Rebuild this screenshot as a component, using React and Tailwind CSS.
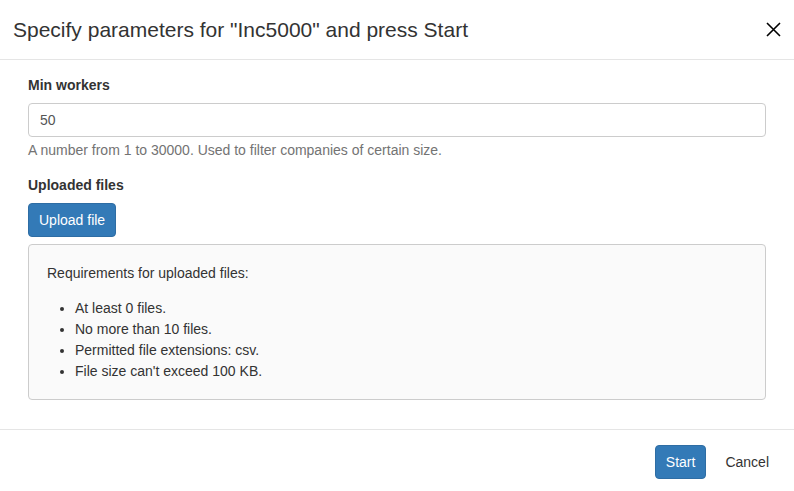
import React from 'react';

const requirements = [
  'At least 0 files.',
  'No more than 10 files.',
  'Permitted file extensions: csv.',
  "File size can't exceed 100 KB.",
];

const App = () => {
  return (
    <div className="w-full bg-white text-[#333] font-['Liberation_Sans',Arial,sans-serif] text-[14px] leading-5">
      {/* Header */}
      <div className="flex items-center justify-between pl-[13px] pr-[13px] pt-[15px] pb-[15px] border-b border-[#e5e5e5]">
        <h4 className="text-[21px] leading-[29px] font-normal">
          Specify parameters for "Inc5000" and press Start
        </h4>
        <button className="w-[15px] h-[15px] flex items-center justify-center text-black">
          <svg width="15" height="15" viewBox="0 0 15 15" fill="none" stroke="currentColor" strokeWidth="1.6">
            <path d="M1 1 L14 14 M14 1 L1 14" />
          </svg>
        </button>
      </div>

      {/* Body */}
      <div className="px-[28px] pt-[15px] pb-[14px]">
        <div className="mb-[15px]">
          <label className="block font-bold mb-[8px]">Min workers</label>
          <input
            type="text"
            defaultValue="50"
            className="block w-full h-[34px] px-[11px] border border-[#ccc] rounded-[4px] text-[14px] text-[#555] outline-none"
          />
          <p className="mt-[3px] text-[#737373]">A number from 1 to 30000. Used to filter companies of certain size.</p>
        </div>

        <div className="mb-[15px]">
          <label className="block font-bold mb-[8px]">Uploaded files</label>
          <button className="h-[34px] px-[10px] bg-[#337ab7] border border-[#2e6da4] rounded-[4px] text-white">
            Upload file
          </button>
          <div className="mt-[7px] bg-[#fafafa] border border-[#ccc] rounded-[4px] pl-[18px] pr-[18px] pt-[18px] pb-[17px]">
            <p className="mb-[15px]">Requirements for uploaded files:</p>
            <ul className="list-disc pl-[28px] leading-[21px]">
              {requirements.map((r) => (
                <li key={r}>{r}</li>
              ))}
            </ul>
          </div>
        </div>
      </div>

      {/* Footer */}
      <div className="flex justify-end items-center gap-[7px] border-t border-[#e5e5e5] pt-[15px] pb-[15px] pr-[13px]">
        <button className="h-[34px] px-[10px] bg-[#337ab7] border border-[#2e6da4] rounded-[4px] text-white">
          Start
        </button>
        <button className="h-[34px] px-[12px] text-[#333]">Cancel</button>
      </div>
    </div>
  );
};

export default App;
